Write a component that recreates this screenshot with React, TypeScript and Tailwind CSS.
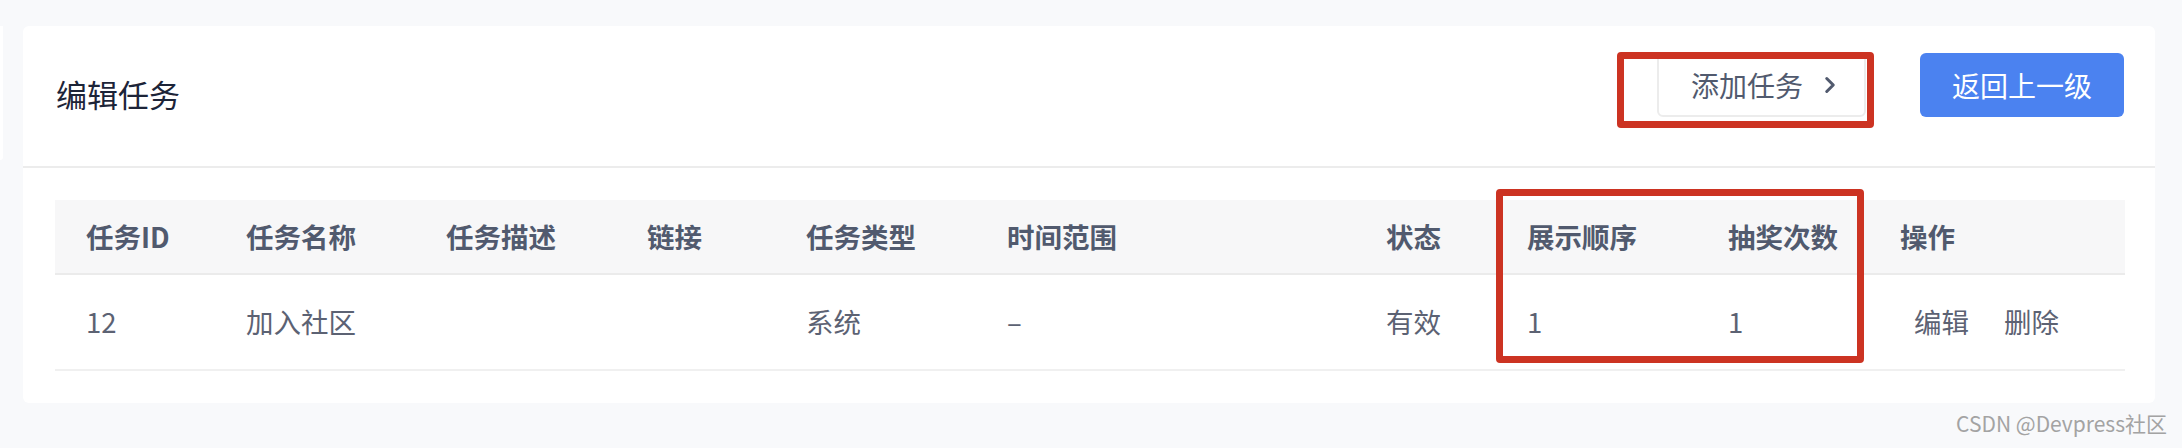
import React from "react";
import { ChevronRight } from "lucide-react";

type Task = {
  id: number;
  name: string;
  desc: string;
  link: string;
  type: string;
  range: string;
  status: string;
  order: number;
  draws: number;
};

const columns = [
  "任务ID",
  "任务名称",
  "任务描述",
  "链接",
  "任务类型",
  "时间范围",
  "状态",
  "展示顺序",
  "抽奖次数",
  "操作",
];

const tasks: Task[] = [
  {
    id: 12,
    name: "加入社区",
    desc: "",
    link: "",
    type: "系统",
    range: "–",
    status: "有效",
    order: 1,
    draws: 1,
  },
];

const gridCols =
  "grid grid-cols-[160px_200px_201px_159px_201px_379px_141px_201px_172px_256px]";

const App: React.FC = () => {
  return (
    <div className="relative w-[2182px] h-[448px] overflow-hidden bg-[#f8f9fb] font-['Noto_Sans_CJK_SC','Noto_Sans',sans-serif] flex items-start pt-[26px]">
      {/* edge of the side panel */}
      <div className="w-[3px] h-[134px] bg-white rounded-br-[4px]" />

      <div className="ml-[20px] w-[2132px] bg-white rounded-[6px]">
        <div className="h-[142px] flex items-center justify-between pl-[33px] pr-[31px] border-b-2 border-[#ececec]">
          <h1 className="text-[31px] leading-none text-[#1c2438] mt-[-6px]">
            编辑任务
          </h1>
          <div className="flex items-center mb-[22px]">
            <button className="w-[209px] h-[64px] flex items-center pl-[32px] bg-white border-2 border-[#ececec] rounded-[6px] text-[28px] leading-none text-[#515a6e]">
              添加任务
              <ChevronRight className="ml-[14px] w-[26px] h-[26px]" strokeWidth={2.8} />
            </button>
            <button className="ml-[54px] w-[204px] h-[64px] flex items-center justify-center bg-[#4b82f0] rounded-[6px] text-[28px] leading-none text-white">
              返回上一级
            </button>
          </div>
        </div>

        <div className="pl-[32px] pr-[30px] py-[32px]">
          <div
            className={`${gridCols} h-[75px] bg-[#f7f7f8] border-b-2 border-[#ebebeb] items-center`}
          >
            {columns.map((c) => (
              <div
                key={c}
                className="pl-[31px] text-[27.5px] leading-none font-semibold text-[#515a6e]"
              >
                {c}
              </div>
            ))}
          </div>
          {tasks.map((t) => (
            <div
              key={t.id}
              className={`${gridCols} h-[96px] border-b-2 border-[#f0f0f0] items-center text-[27.5px] leading-none text-[#5c6273]`}
            >
              <div className="pl-[31px]">{t.id}</div>
              <div className="pl-[31px]">{t.name}</div>
              <div className="pl-[31px]">{t.desc}</div>
              <div className="pl-[31px]">{t.link}</div>
              <div className="pl-[31px]">{t.type}</div>
              <div className="pl-[31px]">{t.range}</div>
              <div className="pl-[31px]">{t.status}</div>
              <div className="pl-[31px]">{t.order}</div>
              <div className="pl-[31px]">{t.draws}</div>
              <div className="pl-[45px] flex gap-[35px]">
                <span>编辑</span>
                <span>删除</span>
              </div>
            </div>
          ))}
        </div>
      </div>

      {/* red annotation boxes */}
      <div className="absolute left-[1617px] top-[52px] w-[257px] h-[76px] border-[7px] border-[#cc3322] rounded-[4px]" />
      <div className="absolute left-[1496px] top-[189px] w-[368px] h-[174px] border-[7px] border-[#cc3322] rounded-[4px]" />

      <div className="absolute right-[15px] top-[413px] text-[21px] leading-none text-[#a3a3a3]">
        CSDN @Devpress社区
      </div>
    </div>
  );
};

export default App;
